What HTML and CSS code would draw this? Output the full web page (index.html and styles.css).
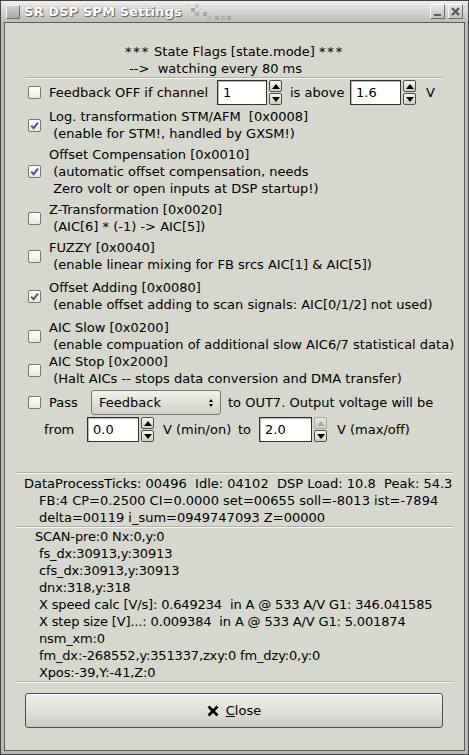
FILE: index.html
```html
<!DOCTYPE html>
<html>
<head>
<meta charset="utf-8">
<title>SR DSP SPM Settings</title>
<link rel="stylesheet" href="styles.css">
</head>
<body>
<div class="window">
  <div class="titlebar">
    <span class="ticon"></span>
    <span class="ttitle">SR DSP SPM Settings</span>
    <svg class="tdeco" width="48" height="21" viewBox="0 0 48 21">
      <rect x="0" y="3" width="4" height="4" fill="#d8d8d8"/>
      <rect x="4" y="7" width="4" height="4" fill="#a8a8a8"/>
      <rect x="8" y="3" width="4" height="4" fill="#c8c8c8"/>
      <rect x="8" y="11" width="4" height="4" fill="#b0b0b0"/>
      <rect x="12" y="7" width="4" height="4" fill="#d4d4d4"/>
      <rect x="16" y="11" width="4" height="4" fill="#a4a4a4"/>
      <rect x="20" y="15" width="4" height="4" fill="#b8b8b8"/>
      <rect x="24" y="11" width="4" height="4" fill="#cccccc"/>
      <rect x="28" y="15" width="4" height="4" fill="#a8a8a8"/>
      <rect x="34" y="15" width="4" height="4" fill="#b4b4b4"/>
      <rect x="40" y="15" width="4" height="4" fill="#aaaaaa"/>
    </svg>
    <span class="tbtns">
      <span class="tbtn"><span class="tmin"></span></span>
      <span class="tbtn">
        <svg width="11" height="11" viewBox="0 0 11 11"><path d="M2 2 L9 9 M9 2 L2 9" stroke="#5a5a5a" stroke-width="2.4" fill="none"/></svg>
      </span>
    </span>
  </div>

  <div class="client">
    <div class="header">
      <div class="hblock">
        <div><span class="stars">***</span> State Flags [state.mode] <span class="stars">***</span></div>
        <div class="pre"> --&gt;  watching every 80 ms</div>
      </div>
    </div>
    <div class="sep sep-inner"></div>

    <div class="flags">
      <div class="row r-first">
        <span class="cb"></span>
        <span class="lbl w-channel">Feedback OFF if channel</span>
        <span class="entry w50">1</span>
        <span class="sbtns"><span class="sb"><span class="tri up"></span></span><span class="sb"><span class="tri down"></span></span></span>
        <span class="lbl w-above">is above</span>
        <span class="entry w51">1.6</span>
        <span class="sbtns"><span class="sb"><span class="tri up"></span></span><span class="sb"><span class="tri down"></span></span></span>
        <span class="lbl unit">V</span>
      </div>

      <div class="row g3">
        <span class="cb on"><svg width="11" height="11" viewBox="0 0 11 11"><path d="M2.2 5.6 L4.6 8.2 L9 2.6" stroke="#6e4a82" stroke-width="2" fill="none"/></svg></span>
        <div class="lines">
          <div>Log. transformation STM/AFM  [0x0008]</div>
          <div> (enable for STM!, handled by GXSM!)</div>
        </div>
      </div>

      <div class="row g4">
        <span class="cb on"><svg width="11" height="11" viewBox="0 0 11 11"><path d="M2.2 5.6 L4.6 8.2 L9 2.6" stroke="#6e4a82" stroke-width="2" fill="none"/></svg></span>
        <div class="lines">
          <div>Offset Compensation [0x0010]</div>
          <div> (automatic offset compensation, needs</div>
          <div> Zero volt or open inputs at DSP startup!)</div>
        </div>
      </div>

      <div class="row g4">
        <span class="cb"></span>
        <div class="lines">
          <div>Z-Transformation [0x0020]</div>
          <div> (AIC[6] * (-1) -&gt; AIC[5])</div>
        </div>
      </div>

      <div class="row g4">
        <span class="cb"></span>
        <div class="lines">
          <div>FUZZY [0x0040]</div>
          <div> (enable linear mixing for FB srcs AIC[1] &amp; AIC[5])</div>
        </div>
      </div>

      <div class="row g6">
        <span class="cb on"><svg width="11" height="11" viewBox="0 0 11 11"><path d="M2.2 5.6 L4.6 8.2 L9 2.6" stroke="#6e4a82" stroke-width="2" fill="none"/></svg></span>
        <div class="lines">
          <div>Offset Adding [0x0080]</div>
          <div> (enable offset adding to scan signals: AIC[0/1/2] not used)</div>
        </div>
      </div>

      <div class="row g6">
        <span class="cb"></span>
        <div class="lines">
          <div>AIC Slow [0x0200]</div>
          <div> (enable compuation of additional slow AIC6/7 statistical data)</div>
        </div>
      </div>

      <div class="row g0">
        <span class="cb"></span>
        <div class="lines">
          <div>AIC Stop [0x2000]</div>
          <div> (Halt AICs -- stops data conversion and DMA transfer)</div>
        </div>
      </div>

      <div class="row g3 single">
        <span class="cb"></span>
        <span class="lbl w-pass">Pass</span>
        <span class="combo">
          <span class="combo-text">Feedback</span>
          <span class="combo-arrows"><span class="tri up small"></span><span class="tri down small"></span></span>
        </span>
        <span class="lbl after-combo">to OUT7. Output voltage will be</span>
      </div>

      <div class="row g2 single from-row">
        <span class="lbl w-from">from</span>
        <span class="entry w52">0.0</span>
        <span class="sbtns"><span class="sb"><span class="tri up"></span></span><span class="sb"><span class="tri down"></span></span></span>
        <span class="lbl w-minon">V (min/on)</span>
        <span class="lbl w-to">to</span>
        <span class="entry w53">2.0</span>
        <span class="sbtns"><span class="sb disabled"><span class="tri up"></span></span><span class="sb"><span class="tri down"></span></span></span>
        <span class="lbl unit">V (max/off)</span>
      </div>
    </div>

    <div class="sep sep-wide sep-stats"></div>
    <div class="stats">
      <div>DataProcessTicks: 00496  Idle: 04102  DSP Load: 10.8  Peak: 54.3</div>
      <div class="ind">FB:4 CP=0.2500 CI=0.0000 set=00655 soll=-8013 ist=-7894</div>
      <div class="ind">delta=00119 i_sum=0949747093 Z=00000</div>
    </div>
    <div class="sep sep-wide"></div>
    <div class="scan">
      <div>SCAN-pre:0 Nx:0,y:0</div>
      <div> fs_dx:30913,y:30913</div>
      <div> cfs_dx:30913,y:30913</div>
      <div> dnx:318,y:318</div>
      <div> X speed calc [V/s]: 0.649234  in A @ 533 A/V G1: 346.041585</div>
      <div> X step size [V]...: 0.009384  in A @ 533 A/V G1: 5.001874</div>
      <div> nsm_xm:0</div>
      <div> fm_dx:-268552,y:351337,zxy:0 fm_dzy:0,y:0</div>
      <div> Xpos:-39,Y:-41,Z:0</div>
    </div>
    <div class="sep sep-wide"></div>

    <div class="btnrow">
      <button class="closebtn" type="button">
        <svg class="xicon" width="12" height="12" viewBox="0 0 12 12"><path d="M1.5 1.5 L10.5 10.5 M10.5 1.5 L1.5 10.5" stroke="#000" stroke-width="2.8" fill="none"/></svg>
        <span><u>C</u>lose</span>
      </button>
    </div>
  </div>
</div>
</body>
</html>
```

FILE: styles.css
```css
* { box-sizing: border-box; }

html, body {
  margin: 0;
  padding: 0;
}

body {
  width: 469px;
  height: 755px;
  overflow: hidden;
  background: #3a3a3a;
  font-family: "DejaVu Sans", "Noto Sans", sans-serif;
  font-size: 13px;
  color: #000;
}

.window {
  width: 469px;
  height: 755px;
  border: 1px solid #444;
  background: #b8b8b8;
  display: flex;
  flex-direction: column;
}

/* ---------- title bar ---------- */
.titlebar {
  height: 21px;
  flex: none;
  display: flex;
  align-items: center;
  background: linear-gradient(#eeeeee, #d6d6d6 45%, #bdbdbd);
  padding-left: 5px;
  padding-right: 5px;
}

.ticon {
  width: 14px;
  height: 14px;
  background: linear-gradient(#cfcfcf, #a9a9a9);
  border: 1px solid;
  border-color: #f2f2f2 #6e6e6e #6e6e6e #f2f2f2;
}

.ttitle {
  margin-left: 4px;
  font-weight: bold;
  font-size: 13px;
  color: #fff;
  letter-spacing: 0.1px;
  text-shadow: 1px 1px 1px #5a5a5a, 0 0 1px #7a7a7a;
}

.tdeco {
  margin-left: 5px;
  align-self: flex-start;
}

.tbtns {
  margin-left: auto;
  display: flex;
  gap: 3px;
}

.tbtn {
  width: 15px;
  height: 15px;
  display: flex;
  align-items: center;
  justify-content: center;
  background: linear-gradient(#e6e6e6, #c2c2c2);
  border: 1px solid;
  border-color: #f6f6f6 #6a6a6a #6a6a6a #f6f6f6;
}

.tmin {
  width: 7px;
  height: 2px;
  background: #5a5a5a;
  margin-top: 6px;
}

/* ---------- client ---------- */
.client {
  flex: 1;
  margin: 0 3px 3px 3px;
  border: 1px solid #5c5c5c;
  background: #d6d7cf;
  display: flex;
  flex-direction: column;
}

.pre { white-space: pre; }

.header {
  padding-top: 20px;
  text-align: center;
  line-height: 17px;
}

.hblock {
  display: inline-block;
  text-align: left;
}

.stars { letter-spacing: 1.8px; }

.sep {
  height: 2px;
  border-top: 1px solid #aeafa8;
  border-bottom: 1px solid #f6f6f2;
  flex: none;
}

.sep-inner { margin: 0 21px 0 20px; }
.sep-wide { margin: 0 11px 0 10px; }
.sep-stats { margin-top: 30px; }

/* ---------- flags ---------- */
.flags {
  padding-left: 23px;
  display: flex;
  flex-direction: column;
}

.row {
  display: flex;
  align-items: center;
}

.r-first { margin-top: 1px; height: 25px; }
.single { height: 25px; }
.g0 { margin-top: 0; }
.g2 { margin-top: 2px; }
.g3 { margin-top: 3px; }
.g4 { margin-top: 4px; }
.g6 { margin-top: 6px; }

.lines {
  line-height: 17px;
}

.lines > div { white-space: pre; }

.cb {
  width: 13px;
  height: 13px;
  flex: none;
  margin-right: 8px;
  border: 1px solid #77776f;
  border-radius: 2px;
  background: linear-gradient(#ffffff, #e8e8e4);
  display: flex;
  align-items: center;
  justify-content: center;
}

.lbl { white-space: pre; flex: none; }
.w-channel { width: 168px; }
.w-above { width: 60px; margin-left: 8px; }
.unit { margin-left: 10px; }
.w-pass { width: 42px; }
.after-combo { margin-left: 7px; }
.from-row { padding-left: 16px; }
.w-from { width: 43px; }
.w-minon { width: 75px; margin-left: 9px; }
.w-to { width: 21px; }

.entry {
  height: 25px;
  flex: none;
  background: #fff;
  border: 1px solid #2f2f2f;
  box-shadow: inset 1px 1px 0 #b8b8b8;
  padding-left: 5px;
  display: flex;
  align-items: center;
}

.w50 { width: 50px; }
.w51 { width: 51px; }
.w52 { width: 52px; }
.w53 { width: 53px; }

.sbtns {
  display: flex;
  flex-direction: column;
  gap: 1px;
  margin-left: 2px;
  flex: none;
}

.sb {
  width: 13px;
  height: 12px;
  border: 1px solid #4e4e4e;
  border-radius: 2px;
  background: linear-gradient(#f6f6f2, #cdcec7);
  display: flex;
  align-items: center;
  justify-content: center;
}

.sb.disabled {
  border-color: #a7a7a2;
  background: linear-gradient(#e4e5df, #d0d1ca);
}

.tri {
  width: 0;
  height: 0;
  border-left: 4px solid transparent;
  border-right: 4px solid transparent;
}

.tri.up { border-bottom: 5px solid #000; }
.tri.down { border-top: 5px solid #000; }
.sb.disabled .tri.up { border-bottom-color: #a9a9a4; }

.tri.small {
  border-left-width: 2.5px;
  border-right-width: 2.5px;
}
.tri.small.up { border-bottom-width: 3px; }
.tri.small.down { border-top-width: 3px; }

.combo {
  width: 130px;
  height: 25px;
  flex: none;
  border: 1px solid #77776f;
  border-radius: 3px;
  background: linear-gradient(#f3f3ef, #dcddd6 60%, #cfd0c9);
  display: flex;
  align-items: center;
  padding-left: 7px;
  padding-right: 7px;
}

.combo-text { flex: 1; }

.combo-arrows {
  display: flex;
  flex-direction: column;
  gap: 2px;
}

/* ---------- stats / scan ---------- */
.stats {
  margin-top: 1px;
  padding-left: 19px;
  line-height: 17px;
}

.stats > div { white-space: pre; }
.stats .ind { padding-left: 15px; }

.scan {
  margin-top: 0;
  padding-left: 30px;
  line-height: 17px;
  letter-spacing: -0.15px;
}

.scan > div { white-space: pre; }

/* ---------- close button ---------- */
.btnrow {
  margin: 10px 21px 0 20px;
}

.closebtn {
  width: 100%;
  height: 35px;
  border: 1px solid #55465d;
  border-radius: 3px;
  background: linear-gradient(#f0f0ec, #dedfd8 55%, #c9cac3);
  box-shadow: inset 0 1px 0 #ffffff;
  font-family: "DejaVu Sans", "Noto Sans", sans-serif;
  font-size: 13px;
  color: #000;
  display: flex;
  align-items: center;
  justify-content: center;
  gap: 7px;
  padding: 0;
}

.xicon { margin-top: 1px; }
```
